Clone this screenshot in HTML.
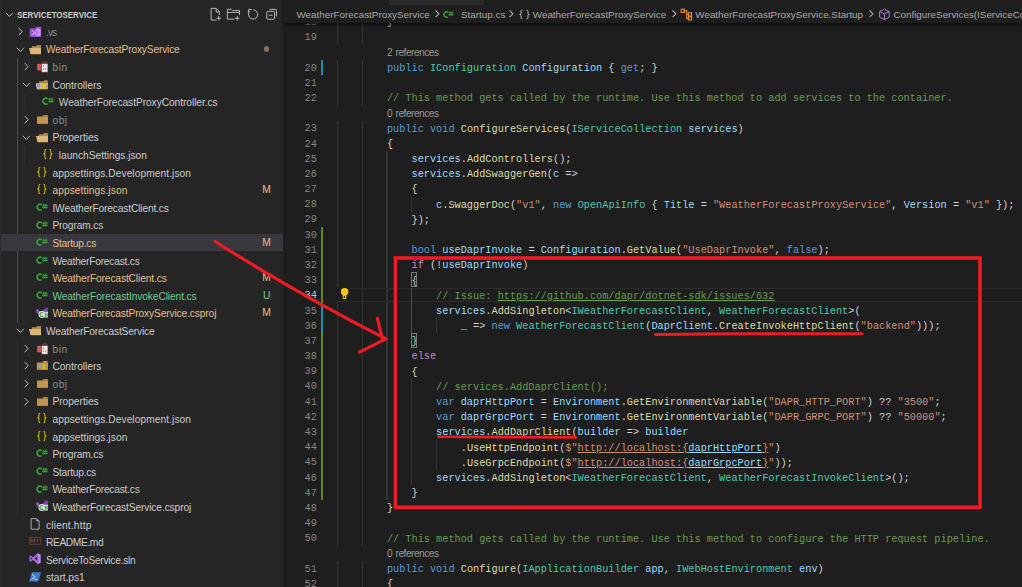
<!DOCTYPE html>
<html><head><meta charset="utf-8"><style>
html,body{margin:0;padding:0;}
body{width:1022px;height:587px;overflow:hidden;position:relative;background:#1e1e1e;font-family:"Liberation Sans",sans-serif;}
#side{position:absolute;left:0;top:0;width:283px;height:587px;background:#252526;overflow:hidden;}
#side .edge{position:absolute;left:0;top:0;width:1px;height:587px;background:#2b2e2c;z-index:5;}
.row{position:absolute;left:0;width:283px;height:17.6px;}
.row.sel{background:#37373d;}
.tw{position:absolute;top:2.4px;width:12.8px;height:12.8px;}
.tw svg{display:block}
.ic{position:absolute;top:2.4px;width:12.8px;height:12.8px;}
.ic svg{display:block}
.lbl{position:absolute;top:1px;line-height:17.6px;font-size:10.2px;letter-spacing:-0.18px;white-space:nowrap;}
.htxt{position:absolute;left:17.2px;top:1.9px;line-height:17.6px;font-size:9.1px;font-weight:bold;color:#cccccc;transform:scaleX(0.872);transform-origin:0 50%;white-space:nowrap;}
.badge{position:absolute;left:261.7px;top:0.2px;line-height:17.6px;font-size:10.4px;width:10px;text-align:center;}
.dot{position:absolute;left:264px;top:6.1px;width:5.4px;height:5.4px;border-radius:50%;background:rgba(226,192,141,0.5);}
.sg{position:absolute;width:0.9px;background:#4d4d4d;}
.sg2{position:absolute;width:0.9px;background:#2f2f2f;}
#ed{position:absolute;left:283px;top:0;width:739px;height:587px;background:#1e1e1e;overflow:hidden;}
.abs{position:absolute;}
.ln{position:absolute;left:0;width:316.8px;margin-top:0.5px;text-align:right;height:15.2px;line-height:15.2px;font-family:"Liberation Mono",monospace;font-size:10.25px;color:#858585;}
.ln.act{color:#c6c6c6;}
.code{position:absolute;left:337.7px;height:15.2px;line-height:15.2px;font-family:"Liberation Mono",monospace;font-size:10.25px;white-space:pre;color:#d4d4d4;margin-top:0.9px;}
.cl{position:absolute;left:387px;margin-top:0.2px;height:15.2px;line-height:15.2px;font-size:10.2px;letter-spacing:-0.5px;word-spacing:1px;color:#999999;white-space:nowrap;}
.ig{position:absolute;width:1.1px;height:15.2px;background:#343434;}
#code{position:absolute;left:0;top:0;width:1022px;height:587px;}
.bc{position:absolute;top:2.6px;line-height:23px;font-size:9.85px;color:#a9a9a9;white-space:nowrap;}
</style></head><body>
<div id="side">
<div class="edge"></div>
<div class="sg" style="left:17.4px;top:58.3px;height:264.4px"></div>
<div class="sg2" style="left:23.8px;top:93.5px;height:17.6px"></div>
<div class="sg2" style="left:23.8px;top:146.3px;height:17.6px"></div>
<div class="sg2" style="left:17.4px;top:339.9px;height:176px"></div>
<div class="row hdr" style="top:5.10px"><span class="tw" style="left:2.9px;top:2.9px"><svg width="12.8" height="12.8" viewBox="0 0 16 16"><path d="M3.5 6l4.5 4.5L12.5 6" fill="none" stroke="#c5c5c5" stroke-width="1.2"/></svg></span><span class="htxt">SERVICETOSERVICE</span></div>
<div class="row" style="top:22.70px"><span class="tw" style="left:13.80px"><svg width="12.8" height="12.8" viewBox="0 0 16 16"><path d="M5.9 3.8L10.2 8.3 5.9 12.8" fill="none" stroke="#c5c5c5" stroke-width="1.2"/></svg></span><span class="ic" style="left:29.20px"><svg class="fi" width="12.8" height="12.8" viewBox="0 0 16 16"><path d="M0.9 4.2H15.1V14.9H0.9z" fill="#9d52d8"/><path d="M8.5 2.2h6l0.6 0.6v1.6H8.5z" fill="#9d52d8"/><path d="M10.6 3.6L14.6 5.2V13.2L10.6 14.8L6.8 11.2L4.4 13L3.2 12.4V7.2L4.4 6.6L6.8 8.6z M10.6 6.8L8.4 9.8L10.6 12z" fill="#c792ee" fill-rule="evenodd"/><path d="M3.2 7.5l2 1.8-2 1.8z" fill="#6a2aa8"/></svg></span><span class="lbl" style="left:46.00px;color:#8c8c8c;letter-spacing:-0.930px">.vs</span></div>
<div class="row" style="top:40.30px"><span class="tw" style="left:13.80px"><svg width="12.8" height="12.8" viewBox="0 0 16 16"><path d="M3.5 6l4.5 4.5L12.5 6" fill="none" stroke="#c5c5c5" stroke-width="1.2"/></svg></span><span class="ic" style="left:29.20px"><svg class="fi" width="12.8" height="12.8" viewBox="0 0 16 16"><path d="M3.5 4H9L9.8 2.5H14.5L15 3V13.8H3.5z" fill="#b48a4e"/><path d="M10 3.1h4.2v0.6H10z" fill="#8c6a3a"/><path d="M0 6.2H15V14H2z" fill="#dcb67a"/></svg></span><span class="lbl" style="left:46.00px;color:#e2c08d;letter-spacing:-0.161px">WeatherForecastProxyService</span><span class="dot"></span></div>
<div class="row" style="top:57.90px"><span class="tw" style="left:20.20px"><svg width="12.8" height="12.8" viewBox="0 0 16 16"><path d="M5.9 3.8L10.2 8.3 5.9 12.8" fill="none" stroke="#c5c5c5" stroke-width="1.2"/></svg></span><span class="ic" style="left:35.60px"><svg class="fi" width="12.8" height="12.8" viewBox="0 0 16 16"><path d="M1.5 4.75H6.6V12.9H1.5z" fill="#cf5a60"/><path d="M6.6 4.2H15.1V15.6H6.6z" fill="#a0522d"/><path d="M8.6 2.4H13.6V4.4H8.6z" fill="none" stroke="#a0522d" stroke-width="0.9"/><path d="M7.4 5H14.3V14.8H7.4z" fill="#ececec"/><path d="M8.8 6.5h1.3v2.2H8.8zM8.8 10.4h1.3v2.2H8.8zM11.6 10.4h1.3v2.2h-1.3z" fill="#9a9a7a"/></svg></span><span class="lbl" style="left:52.40px;color:#8c8c8c;letter-spacing:0.570px">bin</span></div>
<div class="row" style="top:75.50px"><span class="tw" style="left:20.20px"><svg width="12.8" height="12.8" viewBox="0 0 16 16"><path d="M3.5 6l4.5 4.5L12.5 6" fill="none" stroke="#c5c5c5" stroke-width="1.2"/></svg></span><span class="ic" style="left:35.60px"><svg class="fi" width="12.8" height="12.8" viewBox="0 0 16 16"><path d="M4 4.2H9.5L10.3 2.9H14.3L14.75 3.4V13.5H4z" fill="#b48a4e"/><path d="M-0.9 6.5H14.75V14.2H1z" fill="#dcb67a"/><circle cx="3.4" cy="9.8" r="2.2" fill="#6fa8dc"/><path d="M8.4 7.4h3.6v1.2h-1.1v3.3h1.1v1.2H8.4v-1.2h1.1V8.6H8.4z" fill="#f5c400"/><path d="M2.4 13.4h2v1.8h-2z" fill="#3b78c8"/><path d="M12.6 9.8h2.1v1.8h-2.1z" fill="#5a9ad6"/></svg></span><span class="lbl" style="left:52.40px;color:#cccccc;letter-spacing:-0.030px">Controllers</span></div>
<div class="row" style="top:93.10px"><span class="ic" style="left:42.00px"><svg class="fi" width="12.8" height="12.8" viewBox="0 0 16 16"><path d="M7.14 4.76A3.65 3.65 0 1 0 7.14 10.74" fill="none" stroke="#3a9e3a" stroke-width="2"/><path d="M9.6 3.5v6.2M12.6 3.5v6.2M7.9 5.3h6.6M7.9 8h6.6" stroke="#3a9e3a" stroke-width="1.35"/></svg></span><span class="lbl" style="left:58.80px;color:#cccccc;letter-spacing:-0.055px">WeatherForecastProxyController.cs</span></div>
<div class="row" style="top:110.70px"><span class="tw" style="left:20.20px"><svg width="12.8" height="12.8" viewBox="0 0 16 16"><path d="M5.9 3.8L10.2 8.3 5.9 12.8" fill="none" stroke="#c5c5c5" stroke-width="1.2"/></svg></span><span class="ic" style="left:35.60px"><svg class="fi" width="12.8" height="12.8" viewBox="0 0 16 16"><path d="M1.25 4.4H15V13.6H1.25z" fill="#c09553"/><path d="M8.6 2.5h5.4l0.6 0.6v1.6H8.6z" fill="#c09553"/><path d="M9.2 3.1h4.6v0.7H9.2z" fill="#9b7339"/></svg></span><span class="lbl" style="left:52.40px;color:#8c8c8c;letter-spacing:0.570px">obj</span></div>
<div class="row" style="top:128.30px"><span class="tw" style="left:20.20px"><svg width="12.8" height="12.8" viewBox="0 0 16 16"><path d="M3.5 6l4.5 4.5L12.5 6" fill="none" stroke="#c5c5c5" stroke-width="1.2"/></svg></span><span class="ic" style="left:35.60px"><svg class="fi" width="12.8" height="12.8" viewBox="0 0 16 16"><path d="M3.5 4H9L9.8 2.5H14.5L15 3V13.8H3.5z" fill="#b48a4e"/><path d="M10 3.1h4.2v0.6H10z" fill="#8c6a3a"/><path d="M0 6.2H15V14H2z" fill="#dcb67a"/></svg></span><span class="lbl" style="left:52.40px;color:#cccccc;letter-spacing:-0.013px">Properties</span></div>
<div class="row" style="top:145.90px"><span class="ic" style="left:42.00px"><svg class="fi" width="12.8" height="12.8" viewBox="0 0 16 16"><path d="M5.4 1.6C3.6 1.6 3.6 2.6 3.6 4v2.5c0 .8-.6 1.1-2 1.1 1.4 0 2 .4 2 1.2v2.5c0 1.4 0 2.4 1.8 2.4M9.3 1.6c1.8 0 1.8 1 1.8 2.4v2.5c0 .8.6 1.1 2 1.1-1.4 0-2 .4-2 1.2v2.5c0 1.4 0 2.4-1.8 2.4" fill="none" stroke="#d2b624" stroke-width="1.35"/></svg></span><span class="lbl" style="left:58.80px;color:#cccccc;letter-spacing:-0.013px">launchSettings.json</span></div>
<div class="row" style="top:163.50px"><span class="ic" style="left:35.60px"><svg class="fi" width="12.8" height="12.8" viewBox="0 0 16 16"><path d="M5.4 1.6C3.6 1.6 3.6 2.6 3.6 4v2.5c0 .8-.6 1.1-2 1.1 1.4 0 2 .4 2 1.2v2.5c0 1.4 0 2.4 1.8 2.4M9.3 1.6c1.8 0 1.8 1 1.8 2.4v2.5c0 .8.6 1.1 2 1.1-1.4 0-2 .4-2 1.2v2.5c0 1.4 0 2.4-1.8 2.4" fill="none" stroke="#d2b624" stroke-width="1.35"/></svg></span><span class="lbl" style="left:52.40px;color:#cccccc;letter-spacing:0.079px">appsettings.Development.json</span></div>
<div class="row" style="top:181.10px"><span class="ic" style="left:35.60px"><svg class="fi" width="12.8" height="12.8" viewBox="0 0 16 16"><path d="M5.4 1.6C3.6 1.6 3.6 2.6 3.6 4v2.5c0 .8-.6 1.1-2 1.1 1.4 0 2 .4 2 1.2v2.5c0 1.4 0 2.4 1.8 2.4M9.3 1.6c1.8 0 1.8 1 1.8 2.4v2.5c0 .8.6 1.1 2 1.1-1.4 0-2 .4-2 1.2v2.5c0 1.4 0 2.4-1.8 2.4" fill="none" stroke="#d2b624" stroke-width="1.35"/></svg></span><span class="lbl" style="left:52.40px;color:#e2c08d;letter-spacing:0.087px">appsettings.json</span><span class="badge" style="color:#e2c08d">M</span></div>
<div class="row" style="top:198.70px"><span class="ic" style="left:35.60px"><svg class="fi" width="12.8" height="12.8" viewBox="0 0 16 16"><path d="M7.14 4.76A3.65 3.65 0 1 0 7.14 10.74" fill="none" stroke="#3a9e3a" stroke-width="2"/><path d="M9.6 3.5v6.2M12.6 3.5v6.2M7.9 5.3h6.6M7.9 8h6.6" stroke="#3a9e3a" stroke-width="1.35"/></svg></span><span class="lbl" style="left:52.40px;color:#cccccc;letter-spacing:-0.138px">IWeatherForecastClient.cs</span></div>
<div class="row" style="top:216.30px"><span class="ic" style="left:35.60px"><svg class="fi" width="12.8" height="12.8" viewBox="0 0 16 16"><path d="M7.14 4.76A3.65 3.65 0 1 0 7.14 10.74" fill="none" stroke="#3a9e3a" stroke-width="2"/><path d="M9.6 3.5v6.2M12.6 3.5v6.2M7.9 5.3h6.6M7.9 8h6.6" stroke="#3a9e3a" stroke-width="1.35"/></svg></span><span class="lbl" style="left:52.40px;color:#cccccc;letter-spacing:-0.124px">Program.cs</span></div>
<div class="row sel" style="top:233.90px"><span class="ic" style="left:35.60px"><svg class="fi" width="12.8" height="12.8" viewBox="0 0 16 16"><path d="M7.14 4.76A3.65 3.65 0 1 0 7.14 10.74" fill="none" stroke="#3a9e3a" stroke-width="2"/><path d="M9.6 3.5v6.2M12.6 3.5v6.2M7.9 5.3h6.6M7.9 8h6.6" stroke="#3a9e3a" stroke-width="1.35"/></svg></span><span class="lbl" style="left:52.40px;color:#e2c08d;letter-spacing:-0.222px">Startup.cs</span><span class="badge" style="color:#e2c08d">M</span></div>
<div class="row" style="top:251.50px"><span class="ic" style="left:35.60px"><svg class="fi" width="12.8" height="12.8" viewBox="0 0 16 16"><path d="M7.14 4.76A3.65 3.65 0 1 0 7.14 10.74" fill="none" stroke="#3a9e3a" stroke-width="2"/><path d="M9.6 3.5v6.2M12.6 3.5v6.2M7.9 5.3h6.6M7.9 8h6.6" stroke="#3a9e3a" stroke-width="1.35"/></svg></span><span class="lbl" style="left:52.40px;color:#cccccc;letter-spacing:-0.214px">WeatherForecast.cs</span></div>
<div class="row" style="top:269.10px"><span class="ic" style="left:35.60px"><svg class="fi" width="12.8" height="12.8" viewBox="0 0 16 16"><path d="M7.14 4.76A3.65 3.65 0 1 0 7.14 10.74" fill="none" stroke="#3a9e3a" stroke-width="2"/><path d="M9.6 3.5v6.2M12.6 3.5v6.2M7.9 5.3h6.6M7.9 8h6.6" stroke="#3a9e3a" stroke-width="1.35"/></svg></span><span class="lbl" style="left:52.40px;color:#e2c08d;letter-spacing:-0.115px">WeatherForecastClient.cs</span><span class="badge" style="color:#e2c08d">M</span></div>
<div class="row" style="top:286.70px"><span class="ic" style="left:35.60px"><svg class="fi" width="12.8" height="12.8" viewBox="0 0 16 16"><path d="M7.14 4.76A3.65 3.65 0 1 0 7.14 10.74" fill="none" stroke="#3a9e3a" stroke-width="2"/><path d="M9.6 3.5v6.2M12.6 3.5v6.2M7.9 5.3h6.6M7.9 8h6.6" stroke="#3a9e3a" stroke-width="1.35"/></svg></span><span class="lbl" style="left:52.40px;color:#73c991;letter-spacing:-0.094px">WeatherForecastInvokeClient.cs</span><span class="badge" style="color:#73c991">U</span></div>
<div class="row" style="top:304.30px"><span class="ic" style="left:35.60px"><svg class="fi" width="12.8" height="12.8" viewBox="0 0 16 16"><path d="M0.5 3.2L2.2 2.6 6.4 6.2 12.4 0.2 15 1.2V7.6L8 9.5 2.2 8.2 0.5 6.6z" fill="#7d3cae"/><path d="M0.6 3.4L2.2 2.8V8.2L0.6 6.6z" fill="#a467d8"/><circle cx="7.4" cy="9.4" r="4.3" fill="#e6e6e6"/><rect x="10.2" y="6" width="5.4" height="7" rx="1.2" fill="#e6e6e6"/><path d="M9 7.6A2.4 2.4 0 1 0 9 11.2" fill="none" stroke="#3a9e3a" stroke-width="1.4"/><path d="M11.8 7.2v5M13.8 7.2v5M10.8 8.6h4M10.8 10.8h4" stroke="#3a9e3a" stroke-width="0.9"/></svg></span><span class="lbl" style="left:52.40px;color:#e2c08d;letter-spacing:-0.119px">WeatherForecastProxyService.csproj</span><span class="badge" style="color:#e2c08d">M</span></div>
<div class="row" style="top:321.90px"><span class="tw" style="left:13.80px"><svg width="12.8" height="12.8" viewBox="0 0 16 16"><path d="M3.5 6l4.5 4.5L12.5 6" fill="none" stroke="#c5c5c5" stroke-width="1.2"/></svg></span><span class="ic" style="left:29.20px"><svg class="fi" width="12.8" height="12.8" viewBox="0 0 16 16"><path d="M3.5 4H9L9.8 2.5H14.5L15 3V13.8H3.5z" fill="#b48a4e"/><path d="M10 3.1h4.2v0.6H10z" fill="#8c6a3a"/><path d="M0 6.2H15V14H2z" fill="#dcb67a"/></svg></span><span class="lbl" style="left:46.00px;color:#cccccc;letter-spacing:-0.156px">WeatherForecastService</span></div>
<div class="row" style="top:339.50px"><span class="tw" style="left:20.20px"><svg width="12.8" height="12.8" viewBox="0 0 16 16"><path d="M5.9 3.8L10.2 8.3 5.9 12.8" fill="none" stroke="#c5c5c5" stroke-width="1.2"/></svg></span><span class="ic" style="left:35.60px"><svg class="fi" width="12.8" height="12.8" viewBox="0 0 16 16"><path d="M1.5 4.75H6.6V12.9H1.5z" fill="#cf5a60"/><path d="M6.6 4.2H15.1V15.6H6.6z" fill="#a0522d"/><path d="M8.6 2.4H13.6V4.4H8.6z" fill="none" stroke="#a0522d" stroke-width="0.9"/><path d="M7.4 5H14.3V14.8H7.4z" fill="#ececec"/><path d="M8.8 6.5h1.3v2.2H8.8zM8.8 10.4h1.3v2.2H8.8zM11.6 10.4h1.3v2.2h-1.3z" fill="#9a9a7a"/></svg></span><span class="lbl" style="left:52.40px;color:#8c8c8c;letter-spacing:0.570px">bin</span></div>
<div class="row" style="top:357.10px"><span class="tw" style="left:20.20px"><svg width="12.8" height="12.8" viewBox="0 0 16 16"><path d="M5.9 3.8L10.2 8.3 5.9 12.8" fill="none" stroke="#c5c5c5" stroke-width="1.2"/></svg></span><span class="ic" style="left:35.60px"><svg class="fi" width="12.8" height="12.8" viewBox="0 0 16 16"><path d="M1 4.4H15V13.6H1z" fill="#c09553"/><path d="M8.6 2.5h5.4l0.6 0.6v1.6H8.6z" fill="#c09553"/><circle cx="4" cy="9" r="2.1" fill="#6fa8dc"/><path d="M8.4 6.6h3.6v1.2h-1.1v3.1h1.1v1.2H8.4v-1.2h1.1V7.8H8.4z" fill="#f5c400"/><path d="M3 12.2h2v1.8H3z" fill="#3b78c8"/><path d="M12.6 9h2v1.8h-2z" fill="#5a9ad6"/></svg></span><span class="lbl" style="left:52.40px;color:#cccccc;letter-spacing:-0.030px">Controllers</span></div>
<div class="row" style="top:374.70px"><span class="tw" style="left:20.20px"><svg width="12.8" height="12.8" viewBox="0 0 16 16"><path d="M5.9 3.8L10.2 8.3 5.9 12.8" fill="none" stroke="#c5c5c5" stroke-width="1.2"/></svg></span><span class="ic" style="left:35.60px"><svg class="fi" width="12.8" height="12.8" viewBox="0 0 16 16"><path d="M1.25 4.4H15V13.6H1.25z" fill="#c09553"/><path d="M8.6 2.5h5.4l0.6 0.6v1.6H8.6z" fill="#c09553"/><path d="M9.2 3.1h4.6v0.7H9.2z" fill="#9b7339"/></svg></span><span class="lbl" style="left:52.40px;color:#8c8c8c;letter-spacing:0.570px">obj</span></div>
<div class="row" style="top:392.30px"><span class="tw" style="left:20.20px"><svg width="12.8" height="12.8" viewBox="0 0 16 16"><path d="M5.9 3.8L10.2 8.3 5.9 12.8" fill="none" stroke="#c5c5c5" stroke-width="1.2"/></svg></span><span class="ic" style="left:35.60px"><svg class="fi" width="12.8" height="12.8" viewBox="0 0 16 16"><path d="M1.25 4.4H15V13.6H1.25z" fill="#c09553"/><path d="M8.6 2.5h5.4l0.6 0.6v1.6H8.6z" fill="#c09553"/><path d="M9.2 3.1h4.6v0.7H9.2z" fill="#9b7339"/></svg></span><span class="lbl" style="left:52.40px;color:#cccccc;letter-spacing:-0.013px">Properties</span></div>
<div class="row" style="top:409.90px"><span class="ic" style="left:35.60px"><svg class="fi" width="12.8" height="12.8" viewBox="0 0 16 16"><path d="M5.4 1.6C3.6 1.6 3.6 2.6 3.6 4v2.5c0 .8-.6 1.1-2 1.1 1.4 0 2 .4 2 1.2v2.5c0 1.4 0 2.4 1.8 2.4M9.3 1.6c1.8 0 1.8 1 1.8 2.4v2.5c0 .8.6 1.1 2 1.1-1.4 0-2 .4-2 1.2v2.5c0 1.4 0 2.4-1.8 2.4" fill="none" stroke="#d2b624" stroke-width="1.35"/></svg></span><span class="lbl" style="left:52.40px;color:#cccccc;letter-spacing:0.079px">appsettings.Development.json</span></div>
<div class="row" style="top:427.50px"><span class="ic" style="left:35.60px"><svg class="fi" width="12.8" height="12.8" viewBox="0 0 16 16"><path d="M5.4 1.6C3.6 1.6 3.6 2.6 3.6 4v2.5c0 .8-.6 1.1-2 1.1 1.4 0 2 .4 2 1.2v2.5c0 1.4 0 2.4 1.8 2.4M9.3 1.6c1.8 0 1.8 1 1.8 2.4v2.5c0 .8.6 1.1 2 1.1-1.4 0-2 .4-2 1.2v2.5c0 1.4 0 2.4-1.8 2.4" fill="none" stroke="#d2b624" stroke-width="1.35"/></svg></span><span class="lbl" style="left:52.40px;color:#cccccc;letter-spacing:0.087px">appsettings.json</span></div>
<div class="row" style="top:445.10px"><span class="ic" style="left:35.60px"><svg class="fi" width="12.8" height="12.8" viewBox="0 0 16 16"><path d="M7.14 4.76A3.65 3.65 0 1 0 7.14 10.74" fill="none" stroke="#3a9e3a" stroke-width="2"/><path d="M9.6 3.5v6.2M12.6 3.5v6.2M7.9 5.3h6.6M7.9 8h6.6" stroke="#3a9e3a" stroke-width="1.35"/></svg></span><span class="lbl" style="left:52.40px;color:#cccccc;letter-spacing:-0.124px">Program.cs</span></div>
<div class="row" style="top:462.70px"><span class="ic" style="left:35.60px"><svg class="fi" width="12.8" height="12.8" viewBox="0 0 16 16"><path d="M7.14 4.76A3.65 3.65 0 1 0 7.14 10.74" fill="none" stroke="#3a9e3a" stroke-width="2"/><path d="M9.6 3.5v6.2M12.6 3.5v6.2M7.9 5.3h6.6M7.9 8h6.6" stroke="#3a9e3a" stroke-width="1.35"/></svg></span><span class="lbl" style="left:52.40px;color:#cccccc;letter-spacing:-0.236px">Startup.cs</span></div>
<div class="row" style="top:480.30px"><span class="ic" style="left:35.60px"><svg class="fi" width="12.8" height="12.8" viewBox="0 0 16 16"><path d="M7.14 4.76A3.65 3.65 0 1 0 7.14 10.74" fill="none" stroke="#3a9e3a" stroke-width="2"/><path d="M9.6 3.5v6.2M12.6 3.5v6.2M7.9 5.3h6.6M7.9 8h6.6" stroke="#3a9e3a" stroke-width="1.35"/></svg></span><span class="lbl" style="left:52.40px;color:#cccccc;letter-spacing:-0.209px">WeatherForecast.cs</span></div>
<div class="row" style="top:497.90px"><span class="ic" style="left:35.60px"><svg class="fi" width="12.8" height="12.8" viewBox="0 0 16 16"><path d="M0.5 3.2L2.2 2.6 6.4 6.2 12.4 0.2 15 1.2V7.6L8 9.5 2.2 8.2 0.5 6.6z" fill="#7d3cae"/><path d="M0.6 3.4L2.2 2.8V8.2L0.6 6.6z" fill="#a467d8"/><circle cx="7.4" cy="9.4" r="4.3" fill="#e6e6e6"/><rect x="10.2" y="6" width="5.4" height="7" rx="1.2" fill="#e6e6e6"/><path d="M9 7.6A2.4 2.4 0 1 0 9 11.2" fill="none" stroke="#3a9e3a" stroke-width="1.4"/><path d="M11.8 7.2v5M13.8 7.2v5M10.8 8.6h4M10.8 10.8h4" stroke="#3a9e3a" stroke-width="0.9"/></svg></span><span class="lbl" style="left:52.40px;color:#cccccc;letter-spacing:-0.109px">WeatherForecastService.csproj</span></div>
<div class="row" style="top:515.50px"><span class="ic" style="left:29.20px"><svg class="fi" width="12.8" height="12.8" viewBox="0 0 16 16"><path d="M2.6 0.75H9.6L12.6 3.75V14H2.6z" fill="none" stroke="#bdbdbd" stroke-width="1.1"/><path d="M9.3 0.9L12.5 4.1H9.3z" fill="#bdbdbd"/></svg></span><span class="lbl" style="left:46.00px;color:#cccccc;letter-spacing:0.170px">client.http</span></div>
<div class="row" style="top:533.10px"><span class="ic" style="left:29.20px"><svg class="fi" width="12.8" height="12.8" viewBox="0 0 16 16"><rect x="0.4" y="3.25" width="14" height="8.3" fill="none" stroke="#6d4530" stroke-width="1"/><path d="M2.6 9.8V5.2L4.7 7.4 6.8 5.2V9.8" fill="none" stroke="#6d4530" stroke-width="1.3"/><path d="M9.3 6.2H12.3L10.8 9.2z" fill="#6d4530"/><path d="M10.8 4.8v2" stroke="#6d4530" stroke-width="1.2"/></svg></span><span class="lbl" style="left:46.00px;color:#cccccc;letter-spacing:-0.368px">README.md</span></div>
<div class="row" style="top:550.70px"><span class="ic" style="left:29.20px"><svg class="fi" width="12.8" height="12.8" viewBox="0 0 16 16"><path d="M10.8 0.2L14.4 1.8V12.2L10.8 13.8L5.2 8.6 2.2 10.9 0.6 10.1V3.9L2.2 3.1L5.2 5.4z M10.8 3.8L7.5 7L10.8 10.2z M2.2 5.2V8.8L4 7z" fill="#a266dc" fill-rule="evenodd"/><path d="M10.8 0.2L14.4 1.8V12.2L10.8 13.8z" fill="#b585ec"/></svg></span><span class="lbl" style="left:46.00px;color:#cccccc;letter-spacing:-0.259px">ServiceToService.sln</span></div>
<div class="row" style="top:568.30px"><span class="ic" style="left:29.20px"><svg class="fi" width="12.8" height="12.8" viewBox="0 0 16 16"><path d="M3.6 1.6H15.1L11.6 13.25H0.25z" fill="#3a7bd5"/><path d="M4 4.3L7.6 7.3 3.2 10.4" fill="none" stroke="#f4f4f4" stroke-width="1.2"/><path d="M7.2 10.6H10.3" stroke="#f4f4f4" stroke-width="1.1"/></svg></span><span class="lbl" style="left:46.00px;color:#cccccc;letter-spacing:-0.055px">start.ps1</span></div>

<svg style="position:absolute;left:207.5px;top:6.8px" width="14.4" height="14.4" viewBox="0 0 16 16" fill="none" stroke="#c5c5c5" stroke-width="1"><path d="M9.5 14.5H3.5v-13h5.5l3.5 3.5v4"/><path d="M9 1.5v4h3.5"/><path d="M12 10v5M9.5 12.5h5"/></svg>
<svg style="position:absolute;left:226.3px;top:6.8px" width="14.4" height="14.4" viewBox="0 0 16 16" fill="none" stroke="#c5c5c5" stroke-width="1"><path d="M9.5 13.5h-8v-11h4.5l1.5 1.5h7.5v5"/><path d="M1.5 6h13"/><path d="M12.5 10v5M10 12.5h5"/></svg>
<svg style="position:absolute;left:245.8px;top:6.8px" width="14.4" height="14.4" viewBox="0 0 16 16" fill="none" stroke="#c5c5c5" stroke-width="1"><path d="M8.2 3.2A5.1 5.1 0 1 1 4.4 4.6"/><path d="M2.7 6.4V2.7H6.4"/></svg>
<svg style="position:absolute;left:264.8px;top:6.8px" width="14.4" height="14.4" viewBox="0 0 16 16" fill="none" stroke="#c5c5c5" stroke-width="1"><rect x="2" y="4.8" width="8.6" height="8.8" rx="1"/><path d="M5 2.6h6.6q1.2 0 1.2 1.2v6.8"/><path d="M4.2 9.2h4.2"/></svg>

</div>
<div id="code">
<div class="abs" style="left:283px;top:0;width:739px;height:23px;background:#1e1e1e"></div>
<div class="ig" style="left:337.25px;top:14.60px"></div>
<div class="ig" style="left:361.85px;top:14.60px"></div>
<div class="ig" style="left:337.25px;top:29.78px"></div>
<div class="ig" style="left:361.85px;top:29.78px"></div>
<div class="ig" style="left:337.25px;top:60.14px"></div>
<div class="ig" style="left:361.85px;top:60.14px"></div>
<div class="ig" style="left:337.25px;top:75.32px"></div>
<div class="ig" style="left:361.85px;top:75.32px"></div>
<div class="ig" style="left:337.25px;top:90.50px"></div>
<div class="ig" style="left:361.85px;top:90.50px"></div>
<div class="ig" style="left:337.25px;top:120.86px"></div>
<div class="ig" style="left:361.85px;top:120.86px"></div>
<div class="ig" style="left:337.25px;top:136.04px"></div>
<div class="ig" style="left:361.85px;top:136.04px"></div>
<div class="ig" style="left:337.25px;top:151.22px"></div>
<div class="ig" style="left:361.85px;top:151.22px"></div>
<div class="ig" style="left:386.46px;top:151.22px"></div>
<div class="ig" style="left:337.25px;top:166.40px"></div>
<div class="ig" style="left:361.85px;top:166.40px"></div>
<div class="ig" style="left:386.46px;top:166.40px"></div>
<div class="ig" style="left:337.25px;top:181.58px"></div>
<div class="ig" style="left:361.85px;top:181.58px"></div>
<div class="ig" style="left:386.46px;top:181.58px"></div>
<div class="ig" style="left:337.25px;top:196.76px"></div>
<div class="ig" style="left:361.85px;top:196.76px"></div>
<div class="ig" style="left:386.46px;top:196.76px"></div>
<div class="ig" style="left:411.06px;top:196.76px"></div>
<div class="ig" style="left:337.25px;top:211.94px"></div>
<div class="ig" style="left:361.85px;top:211.94px"></div>
<div class="ig" style="left:386.46px;top:211.94px"></div>
<div class="ig" style="left:337.25px;top:227.12px"></div>
<div class="ig" style="left:361.85px;top:227.12px"></div>
<div class="ig" style="left:386.46px;top:227.12px"></div>
<div class="ig" style="left:337.25px;top:242.30px"></div>
<div class="ig" style="left:361.85px;top:242.30px"></div>
<div class="ig" style="left:386.46px;top:242.30px"></div>
<div class="ig" style="left:337.25px;top:257.48px"></div>
<div class="ig" style="left:361.85px;top:257.48px"></div>
<div class="ig" style="left:386.46px;top:257.48px"></div>
<div class="ig" style="left:337.25px;top:272.66px"></div>
<div class="ig" style="left:361.85px;top:272.66px"></div>
<div class="ig" style="left:386.46px;top:272.66px"></div>
<div class="ig" style="left:337.25px;top:287.84px"></div>
<div class="ig" style="left:361.85px;top:287.84px"></div>
<div class="ig" style="left:386.46px;top:287.84px"></div>
<div class="ig" style="left:411.06px;top:287.84px"></div>
<div class="ig" style="left:337.25px;top:303.02px"></div>
<div class="ig" style="left:361.85px;top:303.02px"></div>
<div class="ig" style="left:386.46px;top:303.02px"></div>
<div class="ig" style="left:411.06px;top:303.02px"></div>
<div class="ig" style="left:337.25px;top:318.20px"></div>
<div class="ig" style="left:361.85px;top:318.20px"></div>
<div class="ig" style="left:386.46px;top:318.20px"></div>
<div class="ig" style="left:411.06px;top:318.20px"></div>
<div class="ig" style="left:435.67px;top:318.20px"></div>
<div class="ig" style="left:337.25px;top:333.38px"></div>
<div class="ig" style="left:361.85px;top:333.38px"></div>
<div class="ig" style="left:386.46px;top:333.38px"></div>
<div class="ig" style="left:337.25px;top:348.56px"></div>
<div class="ig" style="left:361.85px;top:348.56px"></div>
<div class="ig" style="left:386.46px;top:348.56px"></div>
<div class="ig" style="left:337.25px;top:363.74px"></div>
<div class="ig" style="left:361.85px;top:363.74px"></div>
<div class="ig" style="left:386.46px;top:363.74px"></div>
<div class="ig" style="left:337.25px;top:378.92px"></div>
<div class="ig" style="left:361.85px;top:378.92px"></div>
<div class="ig" style="left:386.46px;top:378.92px"></div>
<div class="ig" style="left:411.06px;top:378.92px"></div>
<div class="ig" style="left:337.25px;top:394.10px"></div>
<div class="ig" style="left:361.85px;top:394.10px"></div>
<div class="ig" style="left:386.46px;top:394.10px"></div>
<div class="ig" style="left:411.06px;top:394.10px"></div>
<div class="ig" style="left:337.25px;top:409.28px"></div>
<div class="ig" style="left:361.85px;top:409.28px"></div>
<div class="ig" style="left:386.46px;top:409.28px"></div>
<div class="ig" style="left:411.06px;top:409.28px"></div>
<div class="ig" style="left:337.25px;top:424.46px"></div>
<div class="ig" style="left:361.85px;top:424.46px"></div>
<div class="ig" style="left:386.46px;top:424.46px"></div>
<div class="ig" style="left:411.06px;top:424.46px"></div>
<div class="ig" style="left:337.25px;top:439.64px"></div>
<div class="ig" style="left:361.85px;top:439.64px"></div>
<div class="ig" style="left:386.46px;top:439.64px"></div>
<div class="ig" style="left:411.06px;top:439.64px"></div>
<div class="ig" style="left:435.67px;top:439.64px"></div>
<div class="ig" style="left:337.25px;top:454.82px"></div>
<div class="ig" style="left:361.85px;top:454.82px"></div>
<div class="ig" style="left:386.46px;top:454.82px"></div>
<div class="ig" style="left:411.06px;top:454.82px"></div>
<div class="ig" style="left:435.67px;top:454.82px"></div>
<div class="ig" style="left:337.25px;top:470.00px"></div>
<div class="ig" style="left:361.85px;top:470.00px"></div>
<div class="ig" style="left:386.46px;top:470.00px"></div>
<div class="ig" style="left:411.06px;top:470.00px"></div>
<div class="ig" style="left:337.25px;top:485.18px"></div>
<div class="ig" style="left:361.85px;top:485.18px"></div>
<div class="ig" style="left:386.46px;top:485.18px"></div>
<div class="ig" style="left:337.25px;top:500.36px"></div>
<div class="ig" style="left:361.85px;top:500.36px"></div>
<div class="ig" style="left:337.25px;top:515.54px"></div>
<div class="ig" style="left:361.85px;top:515.54px"></div>
<div class="ig" style="left:337.25px;top:530.72px"></div>
<div class="ig" style="left:361.85px;top:530.72px"></div>
<div class="ig" style="left:337.25px;top:561.08px"></div>
<div class="ig" style="left:361.85px;top:561.08px"></div>
<div class="ig" style="left:337.25px;top:576.26px"></div>
<div class="ig" style="left:361.85px;top:576.26px"></div>
<div class="ln" style="top:14.60px">18</div>
<div class="code" style="top:14.60px"><span style="color:#d4d4d4">        </span><span style="color:#d4d4d4">}</span></div>
<div class="ln" style="top:29.78px">19</div>
<div class="cl" style="top:44.96px">2 references</div>
<div class="ln" style="top:60.14px">20</div>
<div class="code" style="top:60.14px"><span style="color:#d4d4d4">        </span><span style="color:#569cd6">public</span><span style="color:#d4d4d4"> </span><span style="color:#4ec9b0">IConfiguration</span><span style="color:#d4d4d4"> </span><span style="color:#9cdcfe">Configuration</span><span style="color:#d4d4d4"> { </span><span style="color:#569cd6">get</span><span style="color:#d4d4d4">; }</span></div>
<div class="ln" style="top:75.32px">21</div>
<div class="ln" style="top:90.50px">22</div>
<div class="code" style="top:90.50px"><span style="color:#d4d4d4">        </span><span style="color:#6a9955">// This method gets called by the runtime. Use this method to add services to the container.</span></div>
<div class="cl" style="top:105.68px">0 references</div>
<div class="ln" style="top:120.86px">23</div>
<div class="code" style="top:120.86px"><span style="color:#d4d4d4">        </span><span style="color:#569cd6">public</span><span style="color:#d4d4d4"> </span><span style="color:#569cd6">void</span><span style="color:#d4d4d4"> </span><span style="color:#dcdcaa">ConfigureServices</span><span style="color:#d4d4d4">(</span><span style="color:#4ec9b0">IServiceCollection</span><span style="color:#d4d4d4"> </span><span style="color:#9cdcfe">services</span><span style="color:#d4d4d4">)</span></div>
<div class="ln" style="top:136.04px">24</div>
<div class="code" style="top:136.04px"><span style="color:#d4d4d4">        </span><span style="color:#d4d4d4">{</span></div>
<div class="ln" style="top:151.22px">25</div>
<div class="code" style="top:151.22px"><span style="color:#d4d4d4">            </span><span style="color:#9cdcfe">services</span><span style="color:#d4d4d4">.</span><span style="color:#dcdcaa">AddControllers</span><span style="color:#d4d4d4">();</span></div>
<div class="ln" style="top:166.40px">26</div>
<div class="code" style="top:166.40px"><span style="color:#d4d4d4">            </span><span style="color:#9cdcfe">services</span><span style="color:#d4d4d4">.</span><span style="color:#dcdcaa">AddSwaggerGen</span><span style="color:#d4d4d4">(</span><span style="color:#9cdcfe">c</span><span style="color:#d4d4d4"> =&gt;</span></div>
<div class="ln" style="top:181.58px">27</div>
<div class="code" style="top:181.58px"><span style="color:#d4d4d4">            </span><span style="color:#d4d4d4">{</span></div>
<div class="ln" style="top:196.76px">28</div>
<div class="code" style="top:196.76px"><span style="color:#d4d4d4">                </span><span style="color:#9cdcfe">c</span><span style="color:#d4d4d4">.</span><span style="color:#dcdcaa">SwaggerDoc</span><span style="color:#d4d4d4">(</span><span style="color:#ce9178">&quot;v1&quot;</span><span style="color:#d4d4d4">, </span><span style="color:#569cd6">new</span><span style="color:#d4d4d4"> </span><span style="color:#4ec9b0">OpenApiInfo</span><span style="color:#d4d4d4"> { </span><span style="color:#9cdcfe">Title</span><span style="color:#d4d4d4"> = </span><span style="color:#ce9178">&quot;WeatherForecastProxyService&quot;</span><span style="color:#d4d4d4">, </span><span style="color:#9cdcfe">Version</span><span style="color:#d4d4d4"> = </span><span style="color:#ce9178">&quot;v1&quot;</span><span style="color:#d4d4d4"> });</span></div>
<div class="ln" style="top:211.94px">29</div>
<div class="code" style="top:211.94px"><span style="color:#d4d4d4">            </span><span style="color:#d4d4d4">});</span></div>
<div class="ln" style="top:227.12px">30</div>
<div class="ln" style="top:242.30px">31</div>
<div class="code" style="top:242.30px"><span style="color:#d4d4d4">            </span><span style="color:#569cd6">bool</span><span style="color:#d4d4d4"> </span><span style="color:#9cdcfe">useDaprInvoke</span><span style="color:#d4d4d4"> = </span><span style="color:#9cdcfe">Configuration</span><span style="color:#d4d4d4">.</span><span style="color:#dcdcaa">GetValue</span><span style="color:#d4d4d4">(</span><span style="color:#ce9178">&quot;UseDaprInvoke&quot;</span><span style="color:#d4d4d4">, </span><span style="color:#569cd6">false</span><span style="color:#d4d4d4">);</span></div>
<div class="ln" style="top:257.48px">32</div>
<div class="code" style="top:257.48px"><span style="color:#d4d4d4">            </span><span style="color:#c586c0">if</span><span style="color:#d4d4d4"> (!</span><span style="color:#9cdcfe">useDaprInvoke</span><span style="color:#d4d4d4">)</span></div>
<div class="ln" style="top:272.66px">33</div>
<div class="code" style="top:272.66px"><span style="color:#d4d4d4">            </span><span style="color:#d4d4d4">{</span></div>
<div class="ln act" style="top:287.84px">34</div>
<div class="code" style="top:287.84px"><span style="color:#d4d4d4">                </span><span style="color:#6a9955">// Issue: </span><span style="color:#6a9955;text-decoration:underline">https://github.com/dapr/dotnet-sdk/issues/632</span></div>
<div class="ln" style="top:303.02px">35</div>
<div class="code" style="top:303.02px"><span style="color:#d4d4d4">                </span><span style="color:#9cdcfe">services</span><span style="color:#d4d4d4">.</span><span style="color:#dcdcaa">AddSingleton</span><span style="color:#d4d4d4">&lt;</span><span style="color:#4ec9b0">IWeatherForecastClient</span><span style="color:#d4d4d4">, </span><span style="color:#4ec9b0">WeatherForecastClient</span><span style="color:#d4d4d4">&gt;(</span></div>
<div class="ln" style="top:318.20px">36</div>
<div class="code" style="top:318.20px"><span style="color:#d4d4d4">                    </span><span style="color:#9cdcfe">_</span><span style="color:#d4d4d4"> =&gt; </span><span style="color:#569cd6">new</span><span style="color:#d4d4d4"> </span><span style="color:#4ec9b0">WeatherForecastClient</span><span style="color:#d4d4d4">(</span><span style="color:#9cdcfe">DaprClient</span><span style="color:#d4d4d4">.</span><span style="color:#dcdcaa">CreateInvokeHttpClient</span><span style="color:#d4d4d4">(</span><span style="color:#ce9178">&quot;backend&quot;</span><span style="color:#d4d4d4">)));</span></div>
<div class="ln" style="top:333.38px">37</div>
<div class="code" style="top:333.38px"><span style="color:#d4d4d4">            </span><span style="color:#d4d4d4">}</span></div>
<div class="ln" style="top:348.56px">38</div>
<div class="code" style="top:348.56px"><span style="color:#d4d4d4">            </span><span style="color:#c586c0">else</span></div>
<div class="ln" style="top:363.74px">39</div>
<div class="code" style="top:363.74px"><span style="color:#d4d4d4">            </span><span style="color:#d4d4d4">{</span></div>
<div class="ln" style="top:378.92px">40</div>
<div class="code" style="top:378.92px"><span style="color:#d4d4d4">                </span><span style="color:#6a9955">// services.AddDaprClient();</span></div>
<div class="ln" style="top:394.10px">41</div>
<div class="code" style="top:394.10px"><span style="color:#d4d4d4">                </span><span style="color:#569cd6">var</span><span style="color:#d4d4d4"> </span><span style="color:#9cdcfe">daprHttpPort</span><span style="color:#d4d4d4"> = </span><span style="color:#9cdcfe">Environment</span><span style="color:#d4d4d4">.</span><span style="color:#dcdcaa">GetEnvironmentVariable</span><span style="color:#d4d4d4">(</span><span style="color:#ce9178">&quot;DAPR_HTTP_PORT&quot;</span><span style="color:#d4d4d4">) ?? </span><span style="color:#ce9178">&quot;3500&quot;</span><span style="color:#d4d4d4">;</span></div>
<div class="ln" style="top:409.28px">42</div>
<div class="code" style="top:409.28px"><span style="color:#d4d4d4">                </span><span style="color:#569cd6">var</span><span style="color:#d4d4d4"> </span><span style="color:#9cdcfe">daprGrpcPort</span><span style="color:#d4d4d4"> = </span><span style="color:#9cdcfe">Environment</span><span style="color:#d4d4d4">.</span><span style="color:#dcdcaa">GetEnvironmentVariable</span><span style="color:#d4d4d4">(</span><span style="color:#ce9178">&quot;DAPR_GRPC_PORT&quot;</span><span style="color:#d4d4d4">) ?? </span><span style="color:#ce9178">&quot;50000&quot;</span><span style="color:#d4d4d4">;</span></div>
<div class="ln" style="top:424.46px">43</div>
<div class="code" style="top:424.46px"><span style="color:#d4d4d4">                </span><span style="color:#9cdcfe">services</span><span style="color:#d4d4d4">.</span><span style="color:#dcdcaa">AddDaprClient</span><span style="color:#d4d4d4">(</span><span style="color:#9cdcfe">builder</span><span style="color:#d4d4d4"> =&gt; </span><span style="color:#9cdcfe">builder</span></div>
<div class="ln" style="top:439.64px">44</div>
<div class="code" style="top:439.64px"><span style="color:#d4d4d4">                    </span><span style="color:#d4d4d4">.</span><span style="color:#dcdcaa">UseHttpEndpoint</span><span style="color:#d4d4d4">(</span><span style="color:#ce9178">$&quot;</span><span style="color:#ce9178;text-decoration:underline">http://localhost:{</span><span style="color:#9cdcfe;text-decoration:underline">daprHttpPort</span><span style="color:#ce9178;text-decoration:underline">}</span><span style="color:#ce9178">&quot;</span><span style="color:#d4d4d4">)</span></div>
<div class="ln" style="top:454.82px">45</div>
<div class="code" style="top:454.82px"><span style="color:#d4d4d4">                    </span><span style="color:#d4d4d4">.</span><span style="color:#dcdcaa">UseGrpcEndpoint</span><span style="color:#d4d4d4">(</span><span style="color:#ce9178">$&quot;</span><span style="color:#ce9178;text-decoration:underline">http://localhost:{</span><span style="color:#9cdcfe;text-decoration:underline">daprGrpcPort</span><span style="color:#ce9178;text-decoration:underline">}</span><span style="color:#ce9178">&quot;</span><span style="color:#d4d4d4">));</span></div>
<div class="ln" style="top:470.00px">46</div>
<div class="code" style="top:470.00px"><span style="color:#d4d4d4">                </span><span style="color:#9cdcfe">services</span><span style="color:#d4d4d4">.</span><span style="color:#dcdcaa">AddSingleton</span><span style="color:#d4d4d4">&lt;</span><span style="color:#4ec9b0">IWeatherForecastClient</span><span style="color:#d4d4d4">, </span><span style="color:#4ec9b0">WeatherForecastInvokeClient</span><span style="color:#d4d4d4">&gt;();</span></div>
<div class="ln" style="top:485.18px">47</div>
<div class="code" style="top:485.18px"><span style="color:#d4d4d4">            </span><span style="color:#d4d4d4">}</span></div>
<div class="ln" style="top:500.36px">48</div>
<div class="code" style="top:500.36px"><span style="color:#d4d4d4">        </span><span style="color:#d4d4d4">}</span></div>
<div class="ln" style="top:515.54px">49</div>
<div class="ln" style="top:530.72px">50</div>
<div class="code" style="top:530.72px"><span style="color:#d4d4d4">        </span><span style="color:#6a9955">// This method gets called by the runtime. Use this method to configure the HTTP request pipeline.</span></div>
<div class="cl" style="top:545.90px">0 references</div>
<div class="ln" style="top:561.08px">51</div>
<div class="code" style="top:561.08px"><span style="color:#d4d4d4">        </span><span style="color:#569cd6">public</span><span style="color:#d4d4d4"> </span><span style="color:#569cd6">void</span><span style="color:#d4d4d4"> </span><span style="color:#dcdcaa">Configure</span><span style="color:#d4d4d4">(</span><span style="color:#4ec9b0">IApplicationBuilder</span><span style="color:#d4d4d4"> </span><span style="color:#9cdcfe">app</span><span style="color:#d4d4d4">, </span><span style="color:#4ec9b0">IWebHostEnvironment</span><span style="color:#d4d4d4"> </span><span style="color:#9cdcfe">env</span><span style="color:#d4d4d4">)</span></div>
<div class="ln" style="top:576.26px">52</div>
<div class="code" style="top:576.26px"><span style="color:#d4d4d4">        </span><span style="color:#d4d4d4">{</span></div>
</div>
<div id="bcbar" class="abs" style="left:283px;top:0;width:739px;height:23px;background:#1e1e1e;box-shadow:0 2px 3px rgba(0,0,0,0.55)">
</div>
<div class="abs" style="left:389.2px;top:0;width:95.2px;height:4.8px;background:#2b2b2b"></div>
<span class="bc" style="left:296.5px">WeatherForecastProxyService</span><svg style="position:absolute;left:432.5px;top:8.6px" width="8" height="9.6" viewBox="0 0 10 12"><path d="M3.2 1.8l4.2 4.2-4.2 4.2" fill="none" stroke="#b4b4b4" stroke-width="1.3"/></svg><svg style="position:absolute;left:443.2px;top:8.6px" width="11.5" height="11.5" viewBox="0 0 16 16"><path d="M7.14 4.76A3.65 3.65 0 1 0 7.14 10.74" fill="none" stroke="#3a9e3a" stroke-width="2"/><path d="M9.6 3.5v6.2M12.6 3.5v6.2M7.9 5.3h6.6M7.9 8h6.6" stroke="#3a9e3a" stroke-width="1.35"/></svg><span class="bc" style="left:461px">Startup.cs</span><svg style="position:absolute;left:507px;top:8.6px" width="8" height="9.6" viewBox="0 0 10 12"><path d="M3.2 1.8l4.2 4.2-4.2 4.2" fill="none" stroke="#b4b4b4" stroke-width="1.3"/></svg><svg style="position:absolute;left:518px;top:9px" width="13" height="11" viewBox="0 0 13 11"><path d="M4.4 1.2C3 1.2 3 1.8 3 3v1.6c0 .6-.4.9-1.3.9 .9 0 1.3.3 1.3.9V8c0 1.2 0 1.8 1.4 1.8M8.6 1.2c1.4 0 1.4.6 1.4 1.8v1.6c0 .6.4.9 1.3.9-.9 0-1.3.3-1.3.9V8c0 1.2 0 1.8-1.4 1.8" fill="none" stroke="#c8c8c8" stroke-width="0.95"/></svg><span class="bc" style="left:532.8px">WeatherForecastProxyService</span><svg style="position:absolute;left:670px;top:8.6px" width="8" height="9.6" viewBox="0 0 10 12"><path d="M3.2 1.8l4.2 4.2-4.2 4.2" fill="none" stroke="#b4b4b4" stroke-width="1.3"/></svg><svg style="position:absolute;left:680px;top:8px" width="12.8" height="12.8" viewBox="0 0 16 16" fill="none" stroke="#ee9d28" stroke-width="1.3"><rect x="1.5" y="1.5" width="4" height="4"/><rect x="10.5" y="6" width="4" height="4"/><rect x="10.5" y="11" width="4" height="4"/><path d="M5.5 3.5h3v10h2M8.5 8h2"/></svg><span class="bc" style="left:695.3px">WeatherForecastProxyService.Startup</span><svg style="position:absolute;left:867px;top:8.6px" width="8" height="9.6" viewBox="0 0 10 12"><path d="M3.2 1.8l4.2 4.2-4.2 4.2" fill="none" stroke="#b4b4b4" stroke-width="1.3"/></svg><svg style="position:absolute;left:877.5px;top:8px" width="12.8" height="12.8" viewBox="0 0 16 16" fill="none" stroke="#b180d7" stroke-width="1.2"><path d="M8 1.5l6 3v7l-6 3-6-3v-7z"/><path d="M2 4.5l6 3 6-3M8 7.5v7"/></svg><span class="bc" style="left:893.4px">ConfigureServices(IServiceCollection services)</span>
<div class="abs" style="left:337.2px;top:287.6px;width:700px;height:14.6px;box-sizing:border-box;border-top:1.4px solid #2b2b2b;border-bottom:1.4px solid #2b2b2b"></div>
<div class="abs" style="left:320.7px;top:59.64px;width:2.4px;height:15.18px;background:#1a8fb6"></div>
<div class="abs" style="left:320.7px;top:226.62px;width:2.4px;height:75.90px;background:#628a10"></div>
<div class="abs" style="left:320.7px;top:302.52px;width:2.4px;height:30.36px;background:#1a8fb6"></div>
<div class="abs" style="left:320.7px;top:332.88px;width:2.4px;height:166.98px;background:#628a10"></div>
<div class="abs" style="left:411.06px;top:287.84px;width:1.1px;height:45.54px;background:#4c4c4c"></div>
<div class="abs" style="left:410.71px;top:271.96px;width:6.45px;height:15.4px;box-sizing:border-box;border:1px solid #7a7a7a;background:rgba(0,100,0,0.1)"></div>
<div class="abs" style="left:410.71px;top:332.68px;width:6.45px;height:15.4px;box-sizing:border-box;border:1px solid #7a7a7a;background:rgba(0,100,0,0.1)"></div>
<div class="abs" style="left:336.6px;top:287.3px;width:13.6px;height:13.4px;background:#1e1e1e"></div>
<svg class="abs" style="left:339px;top:287px" width="12" height="14" viewBox="0 0 12 14"><circle cx="5.6" cy="4.7" r="3.75" fill="#f5c518"/><path d="M3.4 6.5h4.4l-0.5 2h-3.4z" fill="#f5c518"/><path d="M3.7 8.2h3.6v3.9H3.7z" fill="#e8c010"/><ellipse cx="5.4" cy="10" rx="0.75" ry="1.1" fill="#1e1e1e"/></svg>
<svg class="abs" style="left:0;top:0" width="1022" height="587" viewBox="0 0 1022 587"><rect x="395.4" y="258" width="584.6" height="249.3" fill="none" stroke="#ed1c24" stroke-width="3.6"/><path d="M215 241.5Q298.3 294 386 338.9M377.3 318.4L382.3 338.3M359.4 352.1L386 338.9" fill="none" stroke="#ed1c24" stroke-width="3.2" stroke-linecap="round"/><path d="M655.3 334.6Q760 333.3 862 333.8" fill="none" stroke="#ed1c24" stroke-width="3" stroke-linecap="round"/><path d="M438.5 436.8Q510 437.4 575.9 437.4" fill="none" stroke="#ed1c24" stroke-width="2.6" stroke-linecap="round"/></svg>
</body></html>
